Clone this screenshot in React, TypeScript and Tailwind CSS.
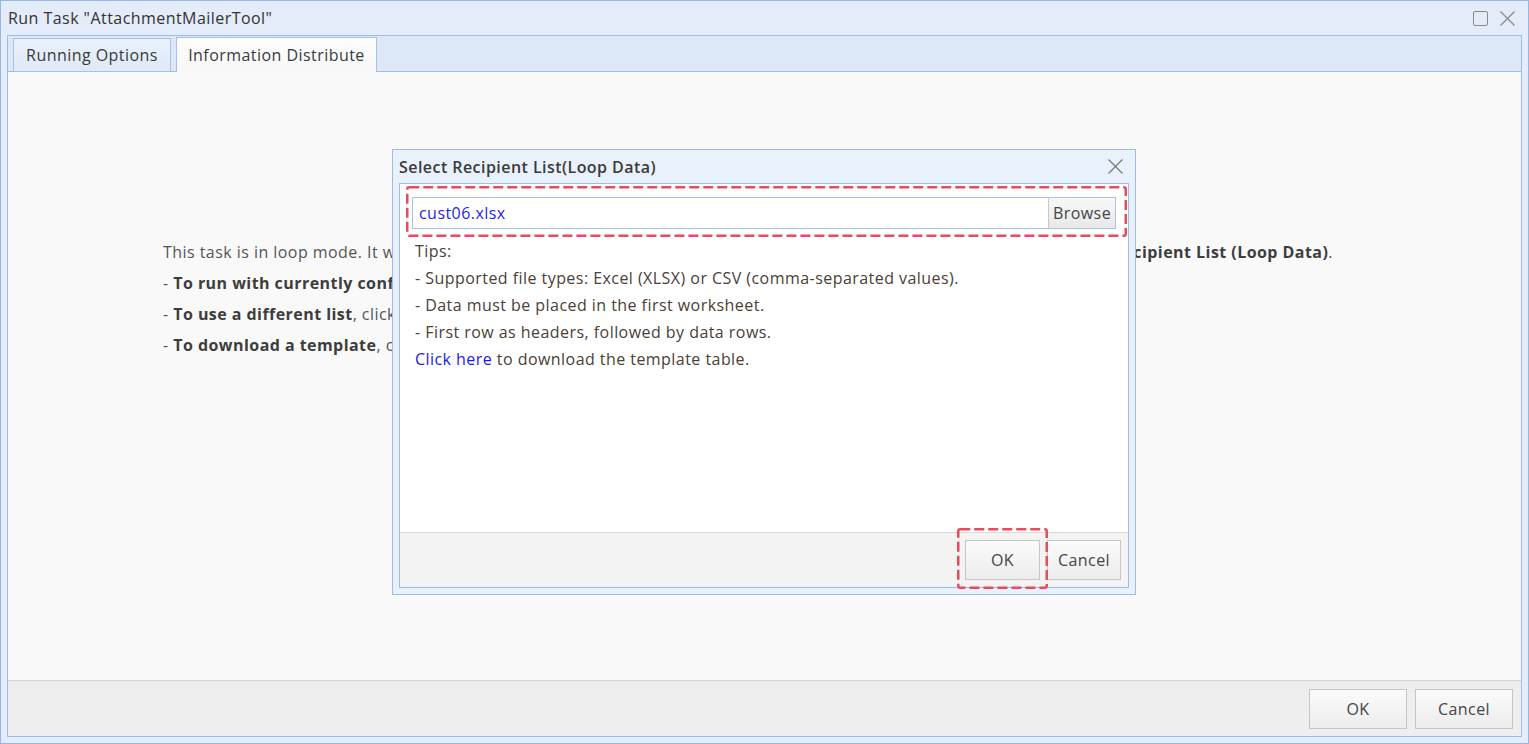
const font = "font-['Open_Sans','Noto_Sans',sans-serif] tracking-[0.45px]";

function Cross({ size, className = '' }: { size: number; className?: string }) {
  return (
    <svg width={size} height={size} viewBox={`0 0 ${size} ${size}`} className={className}>
      <path d={`M0.5 0.5L${size - 0.5} ${size - 0.5}M${size - 0.5} 0.5L0.5 ${size - 0.5}`} stroke="currentColor" strokeWidth="1.3" fill="none" />
    </svg>
  );
}

function DashedBox({ className, w, h }: { className: string; w: number; h: number }) {
  return (
    <svg width={w} height={h} className={`absolute pointer-events-none ${className}`}>
      <rect x="1.25" y="1.25" width={w - 2.5} height={h - 2.5} rx="2" fill="none" stroke="#ea4b5b" strokeWidth="2.5" strokeDasharray="10 4" />
    </svg>
  );
}

function Btn({ label, className = '' }: { label: string; className?: string }) {
  return (
    <button
      className={`border border-[#c6c6c6] bg-gradient-to-b from-[#fbfbfb] to-[#ececec] text-[16px] text-[#444] ${className}`}
    >
      {label}
    </button>
  );
}

function RecipientDialog() {
  return (
    <div className="absolute left-[391px] top-[148px] w-[744px] h-[446px] border border-[#9cbde9] bg-[#e9f1fc] flex flex-col px-[6px] pb-[6px]">
      <div className="h-[33px] flex items-center justify-between pr-[6px]">
        <span className="text-[16px] font-semibold text-[#3a3a3a]">Select Recipient List(Loop Data)</span>
        <Cross size={15} className="text-[#7a7a7a]" />
      </div>
      <div className="flex-1 border border-[#9cbde9] bg-white flex flex-col">
        <div className="flex-1 relative px-[12px] pt-[13px]">
          <DashedBox className="left-[6px] top-[2px]" w={721} h={51} />
          <div className="h-[32px] border border-[#a8c4ea] flex">
            <div className="flex-1 flex items-center pl-[6px] text-[16px] text-[#1f1fe8]">cust06.xlsx</div>
            <div className="w-[67px] border-l border-[#c8c8c8] bg-gradient-to-b from-[#f8f8f8] to-[#e8e8e8] flex items-center justify-center text-[16px] text-[#444]">
              Browse
            </div>
          </div>
          <div className="mt-[9px] pl-[3px] text-[16px] leading-[27px] text-[#4a4036]">
            <div>Tips:</div>
            <div>- Supported file types: Excel (XLSX) or CSV (comma-separated values).</div>
            <div>- Data must be placed in the first worksheet.</div>
            <div>- First row as headers, followed by data rows.</div>
            <div>
              <span className="text-[#1a1aee]">Click here</span> to download the template table.
            </div>
          </div>
        </div>
        <div className="h-[55px] border-t border-[#dadada] bg-[#f3f3f3] flex items-center justify-end gap-[7px] pr-[7px] relative">
          <DashedBox className="left-[557px] top-[-5px]" w={91} h={61} />
          <Btn label="OK" className="w-[75px] h-[40px]" />
          <Btn label="Cancel" className="w-[74px] h-[40px]" />
        </div>
      </div>
    </div>
  );
}

export default function App() {
  return (
    <div className={`${font} relative w-[1529px] h-[744px] border border-[#95b7e7] bg-[#e4ecf9] flex flex-col overflow-hidden`}>
      <div className="h-[34px] flex items-center justify-between pl-[7px] pr-[13px]">
        <span className="text-[16px] text-[#333]">Run Task "AttachmentMailerTool"</span>
        <div className="flex items-center gap-[12px]">
          <div className="w-[15px] h-[15px] border-[1.5px] border-[#8a8a8a] rounded-[2px]" />
          <Cross size={15} className="text-[#8a8a8a]" />
        </div>
      </div>
      <div className="flex-1 mx-[6px] mb-[6px] border border-[#9cbde9] flex flex-col bg-[#f9f9f9]">
        <div className="h-[36px] bg-[#dce8f8] border-b border-[#9cbde9] flex items-end gap-[5px] pl-[5px]">
          <div className="h-[34px] w-[158px] -mb-px border border-[#a4c1ea] bg-gradient-to-b from-[#eaf1fb] to-[#dfe9f8] flex items-center justify-center text-[16px] text-[#3a3a3a]">
            Running Options
          </div>
          <div className="h-[35px] w-[201px] -mb-px border border-b-0 border-[#a4c1ea] bg-gradient-to-b from-[#fdfdfd] to-[#f7f7f7] flex items-center justify-center text-[16px] text-[#3a3a3a]">
            Information Distribute
          </div>
        </div>
        <div className="flex-1 pl-[155px] pt-[165px] text-[16px] leading-[31px] text-[#555]">
          <div className="w-[1170px] flex justify-between">
            <span>This task is in loop mode. It will send emails once for each row of data in the</span>
            <span>
              <b className="text-[#3d3d3d]">Recipient List (Loop Data)</b>.
            </span>
          </div>
          <div>
            - <b className="text-[#3d3d3d]">To run with currently configured list</b>, click OK to start the task.
          </div>
          <div>
            - <b className="text-[#3d3d3d]">To use a different list</b>, click Browse to select another file.
          </div>
          <div>
            - <b className="text-[#3d3d3d]">To download a template</b>, click the link in the dialog.
          </div>
        </div>
        <div className="h-[56px] border-t border-[#d4d4d4] bg-[#eeeeee] flex items-center justify-end gap-[8px] pr-[8px]">
          <Btn label="OK" className="w-[98px] h-[40px]" />
          <Btn label="Cancel" className="w-[98px] h-[40px]" />
        </div>
      </div>
      <RecipientDialog />
    </div>
  );
}
